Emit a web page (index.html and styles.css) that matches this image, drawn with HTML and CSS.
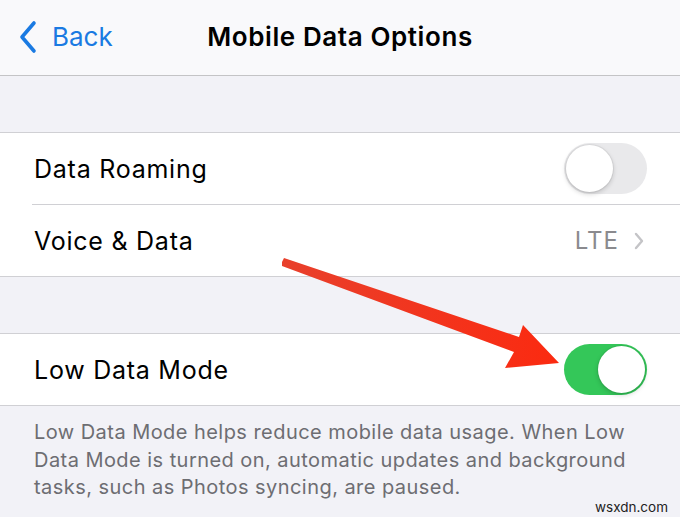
FILE: index.html
```html
<!DOCTYPE html>
<html lang="en">
<head>
<meta charset="UTF-8" />
<meta name="viewport" content="width=device-width, initial-scale=1" />
<title>Mobile Data Options</title>
<link rel="stylesheet" href="styles.css">
</head>
<body>
<div class="screen">
  <header class="navbar">
    <div class="back">
      <svg class="chevron-back" width="20" height="34" viewBox="0 0 20 34">
        <path d="M16 3 L4 17 L16 31" fill="none" stroke="#1a7ae2" stroke-width="3.6" stroke-linecap="round" stroke-linejoin="round"/>
      </svg>
      <span>Back</span>
    </div>
    <div class="title">Mobile Data Options</div>
  </header>

  <div class="gap"></div>

  <section class="group">
    <div class="row">
      <span class="label">Data Roaming</span>
      <div class="switch"><div class="knob"></div></div>
    </div>
    <div class="row">
      <span class="label">Voice &amp; Data</span>
      <div class="detail">
        <span>LTE</span>
        <svg width="12" height="20" viewBox="0 0 12 20">
          <path d="M3 3 L9 10 L3 17" fill="none" stroke="#c4c4c7" stroke-width="2.4" stroke-linecap="round" stroke-linejoin="round"/>
        </svg>
      </div>
    </div>
  </section>

  <div class="gap"></div>

  <section class="group">
    <div class="row">
      <span class="label">Low Data Mode</span>
      <div class="switch on"><div class="knob"></div></div>
    </div>
  </section>

  <footer class="note">
    <p>Low Data Mode helps reduce mobile data usage. When Low Data Mode is turned on, automatic updates and background tasks, such as Photos syncing, are paused.</p>
    <span class="mark">wsxdn.com</span>
  </footer>

  <!-- red pointer drawn over the list -->
  <svg class="pointer" width="680" height="517" viewBox="0 0 680 517">
    <defs>
      <linearGradient id="red" x1="0" y1="0" x2="1" y2="0">
        <stop offset="0" stop-color="#e8402c"/>
        <stop offset="1" stop-color="#fb2a10"/>
      </linearGradient>
    </defs>
    <polygon points="282,262 284,258 519,337 523,325 559,363 505,368 514,352 282,266" fill="url(#red)"/>
  </svg>
</div>
</body>
</html>
```

FILE: styles.css
```css
html, body {
  margin: 0;
  padding: 0;
}
body {
  font-family: Inter, "Liberation Sans", sans-serif;
  background: #f2f2f7;
  color: #000;
}
.screen {
  width: 680px;
  height: 517px;
  position: relative;
  overflow: hidden;
  display: flex;
  flex-direction: column;
}
.navbar {
  height: 75px;
  background: #f9f9fb;
  border-bottom: 1px solid #c4c4c6;
  display: flex;
  align-items: center;
  position: relative;
  flex-shrink: 0;
}
.back {
  display: flex;
  align-items: center;
  gap: 14px;
  padding-left: 18px;
  color: #1a7ae2;
  font-size: 26px;
  margin-top: -2px;
}
.title {
  position: absolute;
  left: 0;
  right: 0;
  text-align: center;
  font-size: 26px;
  font-weight: 600;
  letter-spacing: 0.6px;
  pointer-events: none;
  margin-top: -2px;
}
.gap {
  height: 56px;
  flex-shrink: 0;
}
.group {
  background: #fff;
  border-top: 1px solid #d0d0d4;
  border-bottom: 1px solid #d0d0d4;
  flex-shrink: 0;
}
.row {
  height: 71px;
  margin-left: 32px;
  padding-left: 2px;
  padding-right: 33px;
  display: flex;
  align-items: center;
  justify-content: space-between;
}
.row + .row {
  border-top: 1px solid #d0d0d4;
}
.label {
  font-size: 25px;
  letter-spacing: 0.75px;
}
.detail {
  display: flex;
  align-items: center;
  gap: 14px;
  color: #8a8a8e;
  font-size: 24px;
  letter-spacing: 1px;
  margin-right: 2px;
}
.switch {
  width: 83px;
  height: 51px;
  border-radius: 26px;
  background: #e9e9eb;
  position: relative;
}
.switch .knob {
  position: absolute;
  top: 2px;
  left: 2px;
  width: 47px;
  height: 47px;
  border-radius: 50%;
  background: #fff;
  box-shadow: 0 0 0 1px rgba(0,0,0,0.05), 0 2px 5px rgba(0,0,0,0.18);
}
.switch.on {
  background: #34c759;
}
.switch.on .knob {
  left: 34px;
}
.note {
  position: relative;
  flex: 1;
  padding: 13px 30px 0 34px;
}
.note p {
  margin: 0;
  font-size: 20px;
  letter-spacing: 0.45px;
  line-height: 27.5px;
  color: #6d6d72;
}
.mark {
  position: absolute;
  right: 12px;
  bottom: 2px;
  font-size: 13.5px;
  color: #222;
}
.pointer {
  position: absolute;
  left: 0;
  top: 0;
  pointer-events: none;
}
```
